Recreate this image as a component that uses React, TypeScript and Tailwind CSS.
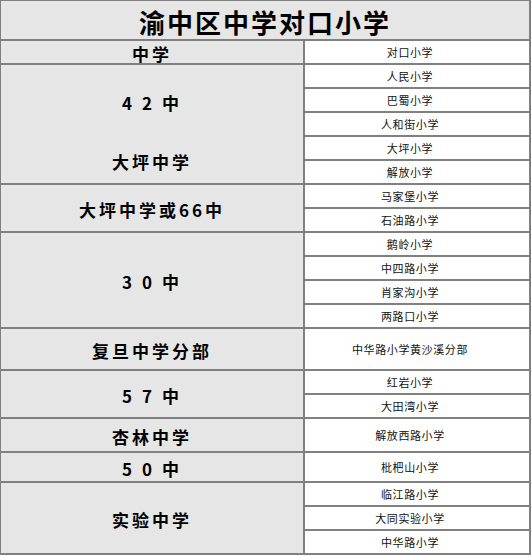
const groups: { labels: { text: string; rows: number }[]; schools: string[]; height?: number }[] = [
  { labels: [{ text: '4 2 中', rows: 3 }, { text: '大坪中学', rows: 2 }], schools: ['人民小学', '巴蜀小学', '人和街小学', '大坪小学', '解放小学'] },
  { labels: [{ text: '大坪中学或66中', rows: 2 }], schools: ['马家堡小学', '石油路小学'] },
  { labels: [{ text: '3 0 中', rows: 4 }], schools: ['鹅岭小学', '中四路小学', '肖家沟小学', '两路口小学'] },
  { labels: [{ text: '复旦中学分部', rows: 1 }], schools: ['中华路小学黄沙溪分部'], height: 40 },
  { labels: [{ text: '5 7 中', rows: 2 }], schools: ['红岩小学', '大田湾小学'] },
  { labels: [{ text: '杏林中学', rows: 1 }], schools: ['解放西路小学'], height: 32 },
  { labels: [{ text: '5 0 中', rows: 1 }], schools: ['枇杷山小学'], height: 28 },
  { labels: [{ text: '实验中学', rows: 3 }], schools: ['临江路小学', '大同实验小学', '中华路小学'] },
];

const font = { fontFamily: '"Noto Sans CJK SC", "Noto Sans", sans-serif' };

export default function App() {
  return (
    <div className="w-[532px] h-[556px] bg-white" style={font}>
      <div className="w-[531px] flex flex-col gap-[2px] bg-[#808080] pt-[1px] pl-[1px] pr-[2px] pb-[2px]">
        <div className="h-[38px] bg-[#e6e6e6] flex items-center justify-center pt-[4px]">
          <span className="text-[26px] font-bold tracking-[2px] leading-none text-black">渝中区中学对口小学</span>
        </div>
        <div className="flex gap-[2px] h-[22px]">
          <div className="w-[302px] bg-[#e6e6e6] flex items-center justify-center pt-[3px]">
            <span className="text-[17px] font-bold tracking-[3px] leading-none text-black">中学</span>
          </div>
          <div className="flex-1 bg-white flex items-center justify-center pr-[14px] pt-[1px]">
            <span className="text-[11px] tracking-[0.6px] leading-none text-[#111]">对口小学</span>
          </div>
        </div>
        {groups.map((g) => (
          <div key={g.schools[0]} className="flex gap-[2px]">
            <div className="w-[302px] bg-[#e6e6e6] flex flex-col">
              {g.labels.map((l) => (
                <div
                  key={l.text}
                  className="flex items-center justify-center pt-[3px]"
                  style={{ height: g.height ?? l.rows * 24 - (l === g.labels[g.labels.length - 1] ? 2 : 0) }}
                >
                  <span className="text-[17px] font-bold tracking-[3px] leading-none text-black whitespace-pre">{l.text}</span>
                </div>
              ))}
            </div>
            <div className="flex-1 flex flex-col gap-[2px]">
              {g.schools.map((s) => (
                <div
                  key={s}
                  className="bg-white flex items-center justify-center pr-[14px] pt-[1px]"
                  style={{ height: g.height ?? 22 }}
                >
                  <span className="text-[11px] tracking-[0.6px] leading-none text-[#111]">{s}</span>
                </div>
              ))}
            </div>
          </div>
        ))}
      </div>
    </div>
  );
}
